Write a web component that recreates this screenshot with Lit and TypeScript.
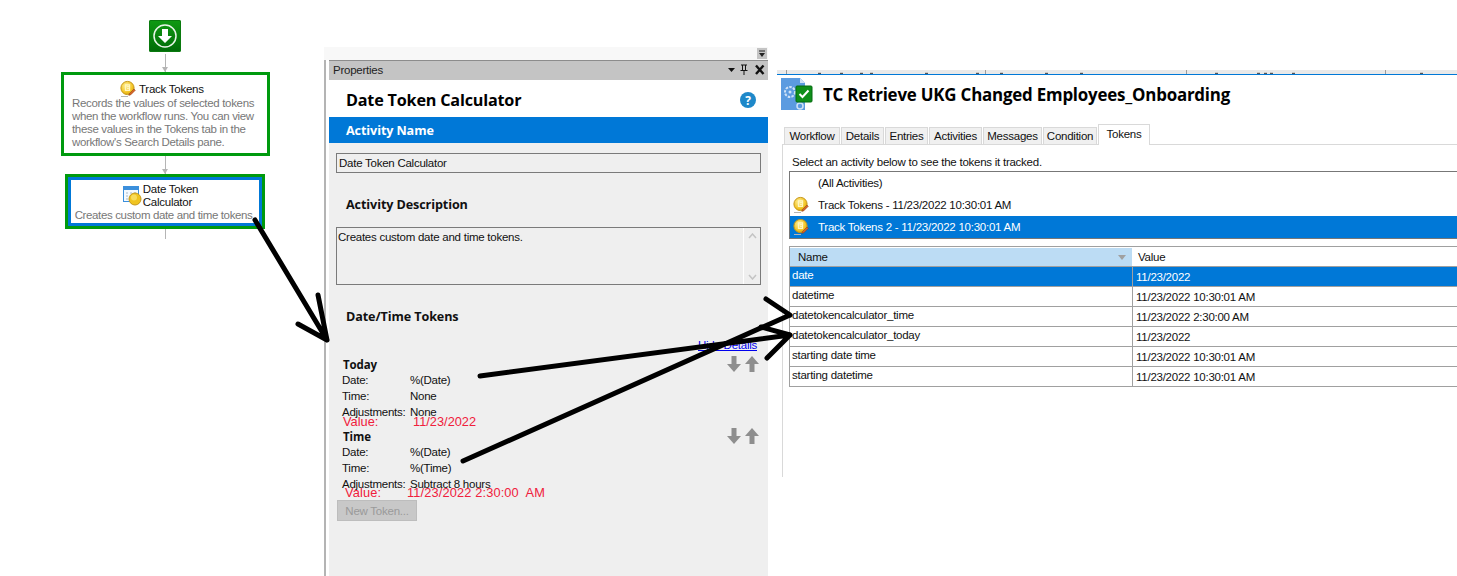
import { LitElement, html, css, svg } from "lit";
import { customElement } from "lit/decorators.js";

const coin = () => html`<svg class="coin" width="16" height="18" viewBox="0 0 16 18">
  <defs><radialGradient id="cg" cx="0.4" cy="0.35" r="0.7"><stop offset="0" stop-color="#fff3a0"/><stop offset="0.7" stop-color="#f3c322"/><stop offset="1" stop-color="#c99a12"/></radialGradient></defs>
  <circle cx="7.5" cy="8" r="6.6" fill="url(#cg)" stroke="#c8981a"/>
  <path d="M5.5 4.8h4v5.600h-4z" fill="none" stroke="#fff6c0" stroke-width="1.2"/>
  <path d="M7 6.600h2M7 8.400h2" stroke="#fff6c0"/>
  <path d="M9.500 13.500l4.500-4.500 1.300 1.300-4.500 4.500-2 .6z" fill="#d9662a" stroke="#8a3a12" stroke-width=".5"/>
  <path d="M1 16.500h7" stroke="#b5b5b5"/>
</svg>`;

const calc = () => html`<svg width="20" height="22" viewBox="0 0 20 22">
  <rect x=".5" y="1.5" width="15" height="15" fill="#f4f9ff" stroke="#3b8fdc"/>
  <rect x="1" y="2" width="14" height="3" fill="#3b8fdc"/>
  <path d="M3 8h2M7 8h2M11 8h2M3 11h2M7 11h2M3 14h2" stroke="#a8b8c8"/>
  <circle cx="12" cy="14" r="6" fill="#f0c420" stroke="#c4981c"/>
  <circle cx="11" cy="12.500" r="3" fill="#f8dc5c"/>
</svg>`;

const tokenRow = (label: string, value: string) => html`<div class="trow"><span class="tlabel">${label}</span><span>${value}</span></div>`;

const moveArrows = () => html`<svg class="moves" width="32" height="16" viewBox="0 0 32 16">
  <path d="M4.500 0h5v8h4.500l-7 8-7-8h4.500z" fill="#8e8e8e"/>
  <path d="M22.500 16h5V8H32l-7-8-7 8h4.500z" fill="#8e8e8e"/>
</svg>`;

const tabs = ["Workflow", "Details", "Entries", "Activities", "Messages", "Condition"];
const tabW = [56, 43, 43, 53, 59, 54];

const rows = [
  ["date", "11/23/2022"],
  ["datetime", "11/23/2022 10:30:01 AM"],
  ["datetokencalculator_time", "11/23/2022 2:30:00 AM"],
  ["datetokencalculator_today", "11/23/2022"],
  ["starting date time", "11/23/2022 10:30:01 AM"],
  ["starting datetime", "11/23/2022 10:30:01 AM"],
];

const ticks = [32, 54, 74, 84, 139, 190, 214, 259, 294, 429, 471, 478, 484, 506, 634];

@customElement("app-root")
export class AppRoot extends LitElement {
  static styles = css`
    :host { display: block; width: 1457px; height: 576px; overflow: hidden; background: #fff; position: relative;
      font-family: "Liberation Sans", Arial, sans-serif; font-size: 11.500px; color: #111; letter-spacing: -0.25px; }
    .page { display: flex; width: 1457px; height: 576px; }
    .flow { width: 318px; padding-left: 6px; display: flex; flex-direction: column; align-items: center; padding-top: 20px; box-sizing: content-box; }
    .start { width: 32px; height: 32px; margin-left: -1px; border-radius: 2px; background: linear-gradient(#0f9a12, #006a08); display: flex; align-items: center; justify-content: center; box-shadow: inset 0 0 0 1px #0a7a0e; }
    .wire { width: 1px; background: #b5b5b5; position: relative; }
    .wire.arrow::after { content: ""; position: absolute; left: -3px; bottom: 0; border: 3.500px solid transparent; border-top: 5px solid #b5b5b5; border-bottom: 0; }
    .w1 { height: 18px; margin-top: 2px; }
    .w2 { height: 18px; }
    .w3 { height: 10px; }
    .card { box-sizing: border-box; background: #fff; border: 3px solid #009a0e; display: flex; flex-direction: column; align-items: center; color: #777; line-height: 13px; white-space: nowrap; letter-spacing: -0.33px; }
    .card .head { display: flex; align-items: center; color: #111; letter-spacing: -0.25px; }
    .track { width: 209px; height: 84px; padding: 6px 0 0 8px; align-items: flex-start; margin-left: 1px; }
    .track .head { margin-left: 48px; gap: 3px; height: 16px; }
    .date { width: 200px; height: 55px; }
    .date-in { box-sizing: border-box; border: 3px solid #0078d7; width: 100%; height: 100%; padding-top: 3px; display: flex; flex-direction: column; align-items: center; }
    .date .head { line-height: 13px; margin-left: -9px; }
    .date .desc { letter-spacing: -0.36px; }

    .prop { width: 444px; margin-top: 47px; display: flex; flex-direction: column; height: 529px; }
    .strip { height: 13px; background: #f8f8f8; display: flex; justify-content: flex-end; padding-right: 1px; }
    .strip b { display: flex; width: 10px; height: 11px; background: #c4c4c4; margin-top: 1px; align-items: center; justify-content: center; }
    .prop-body { flex: 1; display: flex; border-left: 2px solid #b4b4b4; padding-left: 3px; }
    .panel { width: 439px; background: #efefef; display: flex; flex-direction: column; }
    .ph { height: 20px; box-sizing: border-box; border-top: 1px solid #8c8c8c; background: #c4c4c4; display: flex; align-items: center; padding: 0 2px 1px 4px; color: #222; }
    .ph span { flex: 1; }
    .tit { height: 37px; background: #fff; display: flex; align-items: center; justify-content: space-between; padding: 3px 12px 0 17px; box-sizing: border-box; }
    h1 { font: 700 16.200px "Open Sans", sans-serif; margin: 0; color: #000; letter-spacing: -0.2px; }
    .bar { height: 26px; background: #0078d7; color: #fff; display: flex; align-items: center; padding-left: 17px; box-sizing: border-box; font: 700 12.600px "Open Sans", sans-serif; letter-spacing: -0.1px; }
    .sec { padding-left: 17px; font: 700 12.600px "Open Sans", sans-serif; color: #111; letter-spacing: -0.1px; line-height: 18px; }
    .inp { margin: 10px 7px 0 7px; height: 20px; box-sizing: border-box; border: 1px solid #7a7a7a; padding-left: 2px; line-height: 19px; }
    .s1 { margin-top: 23px; }
    .ta { margin: 13px 7px 0 7px; height: 58px; box-sizing: border-box; border: 1px solid #7a7a7a; display: flex; padding-left: 1px; line-height: 19px; }
    .ta span { flex: 1; }
    .sb { width: 17px; border-left: 1px solid #fff; display: flex; flex-direction: column; justify-content: space-between; align-items: center; padding: 5px 0 4px; box-sizing: border-box; }
    .s2 { margin-top: 23px; }
    .hide { align-self: flex-end; margin: 13px 11px 0 0; color: #0000ee; text-decoration: underline; line-height: 12px; }
    .tok { padding-left: 13px; position: relative; }
    .tok.t1 { height: 70px; margin-top: 7px; }
    .tok.t2 { height: 68px; margin-top: 2px; }
    .tok b { display: block; font: 700 11.500px/14px "Open Sans", sans-serif; height: 14px; color: #111; letter-spacing: -0.1px; padding-left: 1px; }
    .trow { display: flex; height: 16px; line-height: 16px; }
    .tlabel { width: 68px; }
    .moves { position: absolute; right: 9px; top: -2px; }
    .val { position: absolute; display: flex; color: #f0203c; font-size: 12.800px; line-height: 14px; letter-spacing: 0; white-space: pre; }
    .t1 .val { left: 14px; top: 57px; }
    .t1 .val span:first-child { width: 70px; }
    .t2 .val { left: 16px; top: 56px; letter-spacing: 0.14px; }
    .t2 .val span:first-child { width: 62px; }
    .btn { margin: 2px 0 0 8px; width: 80px; height: 21px; box-sizing: border-box; background: #c8c8c8; border: 1px solid #bdbdbd; color: #9a9a9a; display: flex; align-items: center; justify-content: center; }

    .right { flex: 1; margin-top: 70px; padding-left: 9px; min-width: 0; display: flex; flex-direction: column; }
    .top { height: 4px; background: #e9e9e9; display: flex; padding-left: 9px; overflow: hidden; }
    .top svg { display: block; }
    .bline { height: 1px; background: #0078d7; }
    .rt { display: flex; align-items: center; gap: 10px; height: 41px; padding: 0 0 3px 4px; box-sizing: border-box; }
    .rt h1 { font-size: 16.900px; }
    .tabs { display: flex; align-items: flex-end; margin: 8px 0 0 7px; height: 20px; gap: 1px; }
    .tab { height: 17px; background: #f0f0f0; border: 1px solid #d9d9d9; border-bottom: 0; box-sizing: border-box; display: flex; align-items: center; justify-content: center; }
    .tab.on { height: 21px; width: 52px; background: #fff; margin-bottom: -1px; position: relative; padding-bottom: 3px; }
    .box { margin-left: 5px; border-left: 1px solid #d9d9d9; border-top: 1px solid #d9d9d9; height: 322px; padding: 10px 0 0 6px; }
    .hint { line-height: 14px; margin-left: 3px; }
    .list { margin-top: 2px; height: 68px; box-sizing: border-box; border: 1px solid #777; border-right: 0; }
    .li { height: 22px; display: flex; align-items: center; padding-left: 3px; gap: 9px; }
    .li .sp { width: 16px; }
    .li.sel { background: #0078d7; color: #fff; }
    .tbl { margin-top: 7px; border-top: 1px solid #a0a0a0; border-left: 1px solid #a0a0a0; padding-top: 1px; }
    .tr { display: grid; grid-template-columns: 342px 1fr; height: 20px; box-sizing: border-box; border-bottom: 1px solid #a0a0a0; }
    .tr.hd { height: 19px; }
    .tr.hd .n { background: #bcdcf4; display: flex; justify-content: space-between; align-items: center; padding: 0 6px 0 8px; }
    .tr.hd .v { border-left: 0; padding-left: 6px; line-height: 18px; }
    .tr .n { padding-left: 2px; line-height: 16px; }
    .tr .v { border-left: 1px solid #a0a0a0; padding-left: 3px; line-height: 20px; }
    .tr.sel { background: #0078d7; color: #fff; }
    .tri { width: 0; height: 0; border: 4px solid transparent; border-top: 5px solid #a0a0a0; border-bottom: 0; }
    .ink { position: absolute; left: 0; top: 0; pointer-events: none; }
  `;

  render() {
    return html`<div class="page">
      <div class="flow">
        <div class="start"><svg width="26" height="26" viewBox="0 0 26 26"><circle cx="13" cy="13" r="11" fill="none" stroke="#e8f5e8" stroke-width="1.500"/><path d="M10 6h6v7h4l-7 7-7-7h4z" fill="#fff"/></svg></div>
        <div class="wire w1 arrow"></div>
        <div class="card track">
          <div class="head">${coin()}<span>Track Tokens</span></div>
          <div>Records the values of selected tokens<br>when the workflow runs. You can view<br>these values in the Tokens tab in the<br>workflow's Search Details pane.</div>
        </div>
        <div class="wire w2 arrow"></div>
        <div class="card date"><div class="date-in">
          <div class="head">${calc()}<span>Date Token<br>Calculator</span></div>
          <div class="desc">Creates custom date and time tokens.</div>
        </div></div>
        <div class="wire w3"></div>
      </div>

      <div class="prop">
        <div class="strip"><b><svg width="8" height="8" viewBox="0 0 8 8"><path d="M1 1h6" stroke="#222"/><path d="M1 3h6L4 7z" fill="#222"/></svg></b></div>
        <div class="prop-body"><div class="panel">
          <div class="ph"><span>Properties</span>
            <svg width="39" height="12" viewBox="0 0 39 12"><path d="M1 4h7L4.500 8z" fill="#111"/><path d="M14 1h6M15.500 1v5M18.500 1v5M13.500 6.500h7M17 7v4" stroke="#111" fill="none"/><path d="M29 1.500l7.500 8.500M36.500 1.500L29 10" stroke="#111" stroke-width="2.400"/></svg>
          </div>
          <div class="tit"><h1>Date Token Calculator</h1>
            <svg width="16" height="16" viewBox="0 0 16 16"><circle cx="8" cy="8" r="8" fill="#1e88c9"/><text x="8" y="12.500" text-anchor="middle" font-family="Open Sans" font-weight="700" font-size="12" fill="#fff">?</text></svg>
          </div>
          <div class="bar">Activity Name</div>
          <div class="inp">Date Token Calculator</div>
          <div class="sec s1">Activity Description</div>
          <div class="ta"><span>Creates custom date and time tokens.</span>
            <div class="sb">
              <svg width="9" height="6" viewBox="0 0 9 6"><path d="M1 5l3.500-4L8 5" fill="none" stroke="#c4c4c4" stroke-width="1.500"/></svg>
              <svg width="9" height="6" viewBox="0 0 9 6"><path d="M1 1l3.500 4L8 1" fill="none" stroke="#c4c4c4" stroke-width="1.500"/></svg>
            </div>
          </div>
          <div class="sec s2">Date/Time Tokens</div>
          <div class="hide">Hide Details</div>
          <div class="tok t1"><b>Today</b>${tokenRow("Date:", "%(Date)")}${tokenRow("Time:", "None")}${tokenRow("Adjustments:", "None")}
            ${moveArrows()}<div class="val"><span>Value:</span><span>11/23/2022</span></div></div>
          <div class="tok t2"><b>Time</b>${tokenRow("Date:", "%(Date)")}${tokenRow("Time:", "%(Time)")}${tokenRow("Adjustments:", "Subtract 8 hours")}
            ${moveArrows()}<div class="val"><span>Value:</span><span>11/23/2022 2:30:00  AM</span></div></div>
          <div class="btn">New Token...</div>
        </div></div>
      </div>

      <div class="right">
        <div class="top"><svg width="671" height="4" viewBox="0 0 671 4">
          ${[0, 199, 400, 599].map((x) => svg`<path d="M${x + 0.5} 0v4" stroke="#9a9a9a"/>`)}
          ${ticks.map((x) => svg`<path d="M${x} 3.400h3" stroke="#555" stroke-width="1.200"/>`)}
        </svg></div>
        <div class="bline"></div>
        <div class="rt">
          <svg width="32" height="33" viewBox="0 0 32 33">
            <path d="M0 0h19l5 5v27H0z" fill="#5b9be0"/><path d="M19 0l5 5h-5z" fill="#cfe2f7"/>
            <circle cx="9" cy="14" r="5" fill="none" stroke="#cfe2f7" stroke-width="2" stroke-dasharray="2.500 1.200"/>
            <circle cx="9" cy="14" r="1.500" fill="#cfe2f7"/>
            <circle cx="19" cy="28" r="3" fill="none" stroke="#cfe2f7" stroke-width="1.500"/>
            <rect x="15" y="8" width="16" height="16" rx="1" fill="#0f8f1a" stroke="#056a10"/>
            <path d="M18.500 16l3 3 6-6.500" fill="none" stroke="#fff" stroke-width="2"/>
          </svg>
          <h1>TC Retrieve UKG Changed Employees_Onboarding</h1>
        </div>
        <div class="tabs">
          ${tabs.map((t, i) => html`<div class="tab" style="width:${tabW[i]}px">${t}</div>`)}
          <div class="tab on">Tokens</div>
        </div>
        <div class="box">
          <div class="hint">Select an activity below to see the tokens it tracked.</div>
          <div class="list">
            <div class="li"><span class="sp"></span><span>(All Activities)</span></div>
            <div class="li">${coin()}<span>Track Tokens - 11/23/2022 10:30:01 AM</span></div>
            <div class="li sel">${coin()}<span>Track Tokens 2 - 11/23/2022 10:30:01 AM</span></div>
          </div>
          <div class="tbl">
            <div class="tr hd"><div class="n"><span>Name</span><span class="tri"></span></div><div class="v">Value</div></div>
            ${rows.map((r, i) => html`<div class="tr ${i === 0 ? "sel" : ""}"><div class="n">${r[0]}</div><div class="v">${r[1]}</div></div>`)}
          </div>
        </div>
      </div>
    </div>
    <svg class="ink" width="1457" height="576" viewBox="0 0 1457 576" fill="none" stroke="#000" stroke-width="5" stroke-linecap="round">
      <path d="M255 220L327 340M318 295L327 340M298 324L327 340"/>
      <path d="M480 376L790 335M761 327L790 335M767 358L790 335"/>
      <path d="M463 461L790 315M766 299L790 315M761 328L790 315"/>
    </svg>`;
  }
}
